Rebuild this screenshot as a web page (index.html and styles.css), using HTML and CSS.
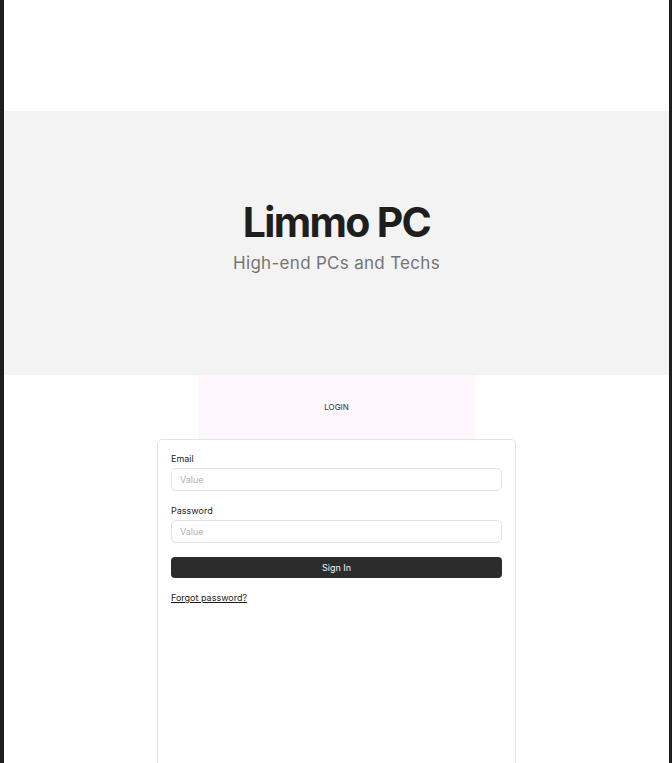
FILE: index.html
```html
<!DOCTYPE html>
<html lang="en">
<head>
<meta charset="utf-8">
<title>Limmo PC</title>
<link rel="stylesheet" href="styles.css">
</head>
<body>
<div class="page">
  <div class="top"></div>
  <section class="hero">
    <h1 class="hero-title">Limmo PC</h1>
    <p class="hero-subtitle">High-end PCs and Techs</p>
  </section>
  <section class="login">
    <div class="tab">LOGIN</div>
    <form class="card">
      <div class="field">
        <label class="label">Email</label>
        <div class="input">Value</div>
      </div>
      <div class="field">
        <label class="label">Password</label>
        <div class="input">Value</div>
      </div>
      <div class="button">Sign In</div>
      <a class="forgot">Forgot password?</a>
    </form>
  </section>
</div>
</body>
</html>
```
FILE: styles.css
```css
html, body {
  margin: 0;
  padding: 0;
}
body {
  background: #1e1e1e;
  font-family: Inter, "Noto Sans", sans-serif;
  height: 763px;
  overflow: hidden;
}
.page {
  margin: 0 3px 0 4px;
  background: #ffffff;
  height: 763px;
  overflow: hidden;
}
.top {
  height: 111px;
}
.hero {
  height: 264px;
  box-sizing: border-box;
  background: #f3f3f3;
  display: flex;
  flex-direction: column;
  align-items: center;
  padding-top: 87px;
  gap: 6px;
}
.hero-title {
  margin: 0;
  font-size: 41px;
  line-height: 49px;
  font-weight: 700;
  color: #1e1e1e;
  letter-spacing: -1.7px;
}
.hero-subtitle {
  margin: 0;
  font-size: 17px;
  line-height: 20px;
  font-weight: 400;
  color: #757575;
  letter-spacing: 0.3px;
}
.login {
  display: flex;
  flex-direction: column;
  align-items: center;
}
.tab {
  width: 277px;
  height: 64px;
  background: #fdf6fd;
  display: flex;
  align-items: center;
  justify-content: center;
  font-size: 8px;
  font-weight: 400;
  color: #333333;
}
.card {
  width: 359px;
  height: 340px;
  box-sizing: border-box;
  border: 1px solid #e3e3e3;
  border-radius: 5px;
  padding: 13px;
  display: flex;
  flex-direction: column;
  gap: 14px;
  margin: 0;
}
.field {
  display: flex;
  flex-direction: column;
  gap: 4px;
}
.label {
  font-size: 9px;
  line-height: 11px;
  color: #1e1e1e;
}
.input {
  height: 23px;
  box-sizing: border-box;
  border: 1px solid #e3e3e3;
  border-radius: 5px;
  padding: 0 8px;
  display: flex;
  align-items: center;
  font-size: 9px;
  color: #b3b3b3;
}
.button {
  height: 21px;
  background: #2c2c2c;
  border-radius: 4px;
  display: flex;
  align-items: center;
  justify-content: center;
  font-size: 9px;
  color: #f5f5f5;
}
.forgot {
  font-size: 9px;
  line-height: 12px;
  color: #1e1e1e;
  text-decoration: underline;
  align-self: flex-start;
}
```
